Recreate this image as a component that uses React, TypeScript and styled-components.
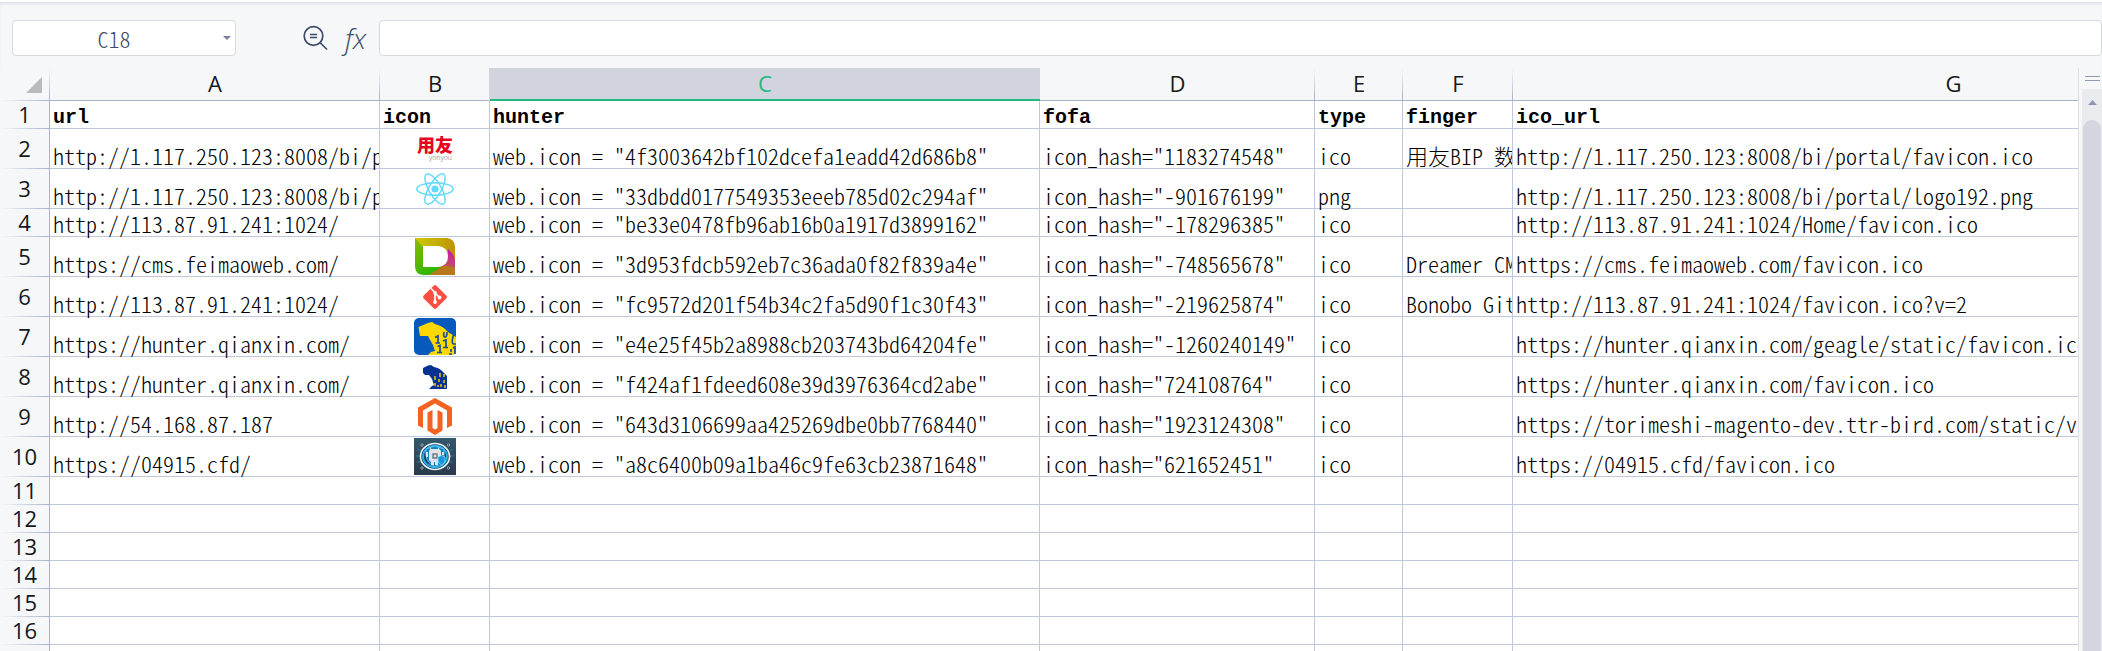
import React from "react";
import styled, { createGlobalStyle, css } from "styled-components";

const GRID = "#c0c8dd";
const RULE = "#a9b3cd";
const CHROME = "#f5f7f9";
const INK = "#3f4b66";
const GREEN = "#21b980";

const GlobalStyle = createGlobalStyle`
  *, *::before, *::after { box-sizing: border-box; }
  body { margin: 0; background: ${CHROME}; }
`;

const cellFont = css`
  font-family: "Noto Sans CJK SC", "Liberation Mono", monospace;
  font-feature-settings: "hwid";
  font-size: 22px;
  font-weight: 300;
  line-height: 26px;
`;

const Window = styled.main`
  display: flex;
  flex-direction: column;
  height: 100vh;
  overflow: hidden;
  background: ${CHROME};
  border-top: 2px solid #fff;
  box-shadow: inset 0 3px 3px -1px #dfe1e5;
`;

const FormulaBar = styled.header`
  display: flex;
  align-items: center;
  padding: 18px 0 12px 12px;
`;

const NameBox = styled.div`
  display: flex;
  width: 224px;
  height: 36px;
  border: 1px solid #d6d9df;
  border-radius: 4px;
  background: #fff;
`;

const NameInput = styled.input`
  ${cellFont}
  flex: 1;
  min-width: 0;
  padding: 0 4px 0 0;
  border: 0;
  outline: 0;
  background: none;
  color: ${INK};
  text-align: center;
`;

const IconButton = styled.button`
  display: flex;
  align-items: center;
  justify-content: center;
  padding: 0;
  border: 0;
  background: none;
  color: ${INK};
`;

const NameToggle = styled(IconButton)`
  width: 16px;
`;

const Tools = styled.div`
  display: flex;
  align-items: center;
  gap: 14px;
  margin: 0 10px 0 66px;
`;

const FxButton = styled(IconButton)`
  width: 27px;
  font: italic 300 28px/36px "Open Sans", "Noto Sans", sans-serif;
`;

const FormulaInput = styled.input`
  ${cellFont}
  flex: 1;
  min-width: 0;
  height: 36px;
  padding: 0 8px;
  border: 1px solid #d6d9df;
  border-radius: 4px;
  outline: 0;
  background: #fff;
`;

const Workspace = styled.div`
  display: flex;
  flex: 1;
  min-height: 0;
`;

const SheetView = styled.div`
  flex: 1;
  min-width: 0;
  overflow: hidden;
  border-right: 1px solid #dcdfe6;
`;

const Sheet = styled.table`
  table-layout: fixed;
  width: 2394px;
  border-collapse: separate;
  border-spacing: 0;
  color: #000;
`;

const Col = styled.col<{ $w: number }>`
  width: ${(p) => p.$w}px;
`;

const labelFont = css`
  padding: 0 0 2px;
  font: 400 22px/24px "Open Sans", "Noto Sans", sans-serif;
  color: #15171c;
  text-align: center;
  vertical-align: middle;
`;

const ColumnLabel = styled.th<{ $selected?: boolean }>`
  ${labelFont}
  height: 33px;
  border-bottom: 1px solid ${RULE};
  background: linear-gradient(to top, ${RULE}, ${CHROME}) right / 1px 100% no-repeat ${CHROME};
  ${(p) =>
    p.$selected &&
    css`
      color: ${GREEN};
      background: #d1d4dc;
      border-bottom: 2px solid ${GREEN};
      box-shadow: -1px 0 #d1d4dc;
    `}
`;

const Corner = styled(ColumnLabel)`
  padding: 0;
  border-bottom: 0;
  background:
    linear-gradient(to top, ${RULE}, ${CHROME}) right / 1px 100% no-repeat,
    linear-gradient(to left, ${RULE}, ${CHROME}) bottom / 100% 1px no-repeat ${CHROME};

  button {
    margin-left: 26px;
  }
`;

const Row = styled.tr<{ $tall?: boolean }>`
  height: ${(p) => (p.$tall ? 40 : 28)}px;
`;

const RowLabel = styled.th`
  ${labelFont}
  border-right: 1px solid ${RULE};
  background: linear-gradient(to left, ${RULE}, ${CHROME}) bottom / 100% 1px no-repeat ${CHROME};
`;

const Cell = styled.td`
  ${cellFont}
  padding: 0 0 0 3px;
  overflow-x: clip;
  overflow-y: visible;
  border-right: 1px solid ${GRID};
  border-bottom: 1px solid ${GRID};
  background: #fff;
  white-space: pre;
  vertical-align: bottom;
`;

const TitleCell = styled(Cell)`
  font-family: "Liberation Mono", monospace;
  font-size: 20px;
  font-weight: 700;
  line-height: 20px;
`;

const IconCell = styled(Cell)`
  padding: 0;
  vertical-align: middle;

  svg {
    display: block;
    margin: 0 auto;
  }
`;

const ScrollColumn = styled.div`
  display: flex;
  flex-direction: column;
  width: 23px;
  padding-left: 3px;
`;

const SplitHandle = styled.div`
  height: 5px;
  margin: 8px 2px 8px 3px;
  border: solid #8e9ab4;
  border-width: 1px 0;
`;

const Track = styled.div`
  display: flex;
  flex: 1;
  flex-direction: column;
  background: #e9ebef;
`;

const ScrollUp = styled(IconButton)`
  height: 31px;
  padding-bottom: 4px;
`;

const Thumb = styled.div`
  flex: 1;
  margin: 0 1px;
  border-radius: 9px 9px 0 0;
  background: #d3d6de;
`;

const YonyouIcon = () => (
  <svg width="36" height="28" viewBox="0 0 36 28" role="img" aria-label="yonyou">
    <text x="0" y="17" fill="#e8051b" fontFamily='"Noto Sans CJK SC", sans-serif' fontSize="18" fontWeight="900">用友</text>
    <text x="12" y="25" fill="#6a6a6a" fontFamily='"Open Sans", sans-serif' fontSize="7">yonyou</text>
  </svg>
);

const ReactIcon = () => (
  <svg width="40" height="34" viewBox="-20 -17 40 34" fill="none" stroke="#61dafb" strokeWidth="1.5" role="img" aria-label="React">
    <circle r="3.6" fill="#61dafb" stroke="none" />
    <ellipse rx="18.2" ry="6.2" />
    <ellipse rx="17.2" ry="6.2" transform="rotate(60)" />
    <ellipse rx="17.2" ry="6.2" transform="rotate(120)" />
  </svg>
);

const DreamerIcon = () => (
  <svg width="40" height="37" viewBox="0 0 40 37" role="img" aria-label="Dreamer CMS">
    <defs>
      <linearGradient id="dTop" x1="0" x2="1"><stop offset="0" stopColor="#cfca08" /><stop offset="1" stopColor="#bd9303" /></linearGradient>
      <linearGradient id="dLeft" x1="0" x2="0.6" y1="0" y2="1"><stop offset="0" stopColor="#8fb800" /><stop offset="1" stopColor="#27b808" /></linearGradient>
      <linearGradient id="dRight" x1="0" x2="0" y1="0" y2="1"><stop offset="0" stopColor="#cc12ae" /><stop offset="1" stopColor="#c3683c" /></linearGradient>
    </defs>
    <path d="M0 0H32Q40 1 40 9V37H0Z" fill="url(#dTop)" />
    <path d="M0 37V0L8 9V29H28L14 37Z" fill="url(#dLeft)" />
    <path d="M0 28Q0 37 9 37H0Z" fill="#fff" />
    <path d="M33 11Q40 17 40 23V37H14Q32 30 33 11Z" fill="url(#dRight)" />
    <path d="M14 37L28 28Q34 27 40 30V37Z" fill="#b9781c" />
    <path d="M8 8H23Q33 9 33 18.500Q33 28 23 29H8Z" fill="#fff" />
  </svg>
);

const GitIcon = () => (
  <svg width="24" height="24" viewBox="0 0 24 24" role="img" aria-label="Git">
    <path d="M10.600.7Q12-.5 13.400.7L23.300 10.600Q24.500 12 23.300 13.400L13.400 23.300Q12 24.500 10.600 23.300L.7 13.400Q-.5 12 .7 10.600Z" fill="#fc4f44" />
    <path d="M8 3.500L12 7.500V17M12 8L16.500 12.500" fill="none" stroke="#fff" strokeWidth="1.700" />
    <circle cx="12" cy="8" r="1.900" fill="#fff" />
    <circle cx="12" cy="17" r="1.900" fill="#fff" />
    <circle cx="16.500" cy="12.500" r="1.900" fill="#fff" />
  </svg>
);

const HunterIcon = () => (
  <svg width="42" height="37" viewBox="0 0 42 37" role="img" aria-label="Hunter">
    <rect width="42" height="37" rx="5" fill="#0859bd" />
    <path d="M4.500 9L14 5L18 4L21 6Q29 8 34 14L42 19V32Q42 37 37 37H14L17 34L21 33L19 27Q16 22 14 18L10 18L6 18L5.500 15Z" fill="#ffd800" />
    <path d="M21 19.500L24 18V25M21.500 25H26M30 14Q29 19 31 19Q33 19 33 14M29 23L32 22V29M29 29.500H34M23.500 28.500L26 27.500V34M23 34.500H28M39.500 17Q37 25 39.500 26H42M39 30L41 29V36M35 36H38M37 31V34" fill="none" stroke="#164f94" strokeWidth="1.700" />
  </svg>
);

const HunterSmallIcon = () => (
  <svg width="24" height="24" viewBox="0 0 24 24" role="img" aria-label="Hunter">
    <path d="M0 3L5 .5L8 0L11 2Q17 3 20 7L24 11V24H6L9 21L11 20L9 14L6 10H2L0 8Z" fill="#073193" />
    <path d="M12 11V15M12 18V21M17 8V12M16 14V17M15 20V22M21 9V12M21 15V18M22 20V23M18 19V22" stroke="#d9c516" strokeWidth="1.600" />
  </svg>
);

const MagentoIcon = () => (
  <svg width="36" height="37" viewBox="0 0 36 37" fill="#f26322" role="img" aria-label="Magento">
    <path d="M18 0L35 9.500V27.500L30 30V12.500L18 5.500L6 12.500V30L1 27.500V9.500Z" />
    <path d="M10.500 14.500L15.500 12V30L18 31.500L20.500 30V12L25.500 14.500V32.500L18 37L10.500 32.500Z" />
  </svg>
);

const RobotIcon = () => (
  <svg width="42" height="37" viewBox="0 0 42 37" role="img" aria-label="Robot shield">
    <defs>
      <linearGradient id="rBg" x1="0" x2="0" y1="0" y2="1"><stop offset="0" stopColor="#34586b" /><stop offset="1" stopColor="#2c3a4d" /></linearGradient>
    </defs>
    <rect width="42" height="37" fill="url(#rBg)" />
    <path d="M3 12H7M2 18H6M3 24H8M36 12H39M36 18H40M35 24H39" stroke="#287b98" strokeWidth="1" />
    <g fill="none" stroke="#9fb6c2" strokeWidth=".8">
      <circle cx="8" cy="7" r="1.200" /><circle cx="34.500" cy="7" r="1.200" /><circle cx="8" cy="30" r="1.200" /><circle cx="34.500" cy="30" r="1.200" />
    </g>
    <ellipse cx="21" cy="18.500" rx="14.500" ry="13" fill="#1d3f58" stroke="#e8f3f8" strokeWidth="1.600" />
    <ellipse cx="21" cy="18.500" rx="12" ry="10.700" fill="none" stroke="#2ba9e6" strokeWidth="2" />
    <path d="M12 11L21 8L30 11V18Q29 25 21 29Q13 25 12 18Z" fill="#1580b8" stroke="#53c6f4" strokeWidth="1" />
    <path d="M17 12L16 9.500M24 12L25 9.500" stroke="#dfe8ee" />
    <rect x="15" y="11" width="12" height="13" rx="3" fill="#dfe5ea" />
    <path d="M13 14V19M29 14V17" stroke="#dfe5ea" strokeWidth="2" />
    <rect x="17" y="24" width="3" height="3" fill="#dfe5ea" />
    <rect x="21" y="24" width="3" height="3" fill="#dfe5ea" />
    <rect x="19" y="16" width="4" height="4" fill="#dfe5ea" stroke="#53606d" strokeWidth="1.200" />
    <path d="M24 19L27.500 17.500L31 19V23Q30 26 27.500 27Q24.500 25 24 23Z" fill="#1597dc" stroke="#8fdcff" strokeWidth=".8" />
  </svg>
);

interface Column {
  id: string;
  width: number;
}

const columns: Column[] = [
  { id: "A", width: 330 },
  { id: "B", width: 110 },
  { id: "C", width: 550 },
  { id: "D", width: 275 },
  { id: "E", width: 88 },
  { id: "F", width: 110 },
  { id: "G", width: 881 },
];

interface Entry {
  url: string;
  Icon?: React.ComponentType;
  hunter: string;
  fofa: string;
  type: string;
  finger?: string;
  icoUrl: string;
}

const titles = ["url", "icon", "hunter", "fofa", "type", "finger", "ico_url"];

const entries: Entry[] = [
  { url: "http://1.117.250.123:8008/bi/portal/", Icon: YonyouIcon, hunter: "4f3003642bf102dcefa1eadd42d686b8", fofa: "1183274548", type: "ico", finger: "用友BIP 数据", icoUrl: "http://1.117.250.123:8008/bi/portal/favicon.ico" },
  { url: "http://1.117.250.123:8008/bi/portal/", Icon: ReactIcon, hunter: "33dbdd0177549353eeeb785d02c294af", fofa: "-901676199", type: "png", icoUrl: "http://1.117.250.123:8008/bi/portal/logo192.png" },
  { url: "http://113.87.91.241:1024/", hunter: "be33e0478fb96ab16b0a1917d3899162", fofa: "-178296385", type: "ico", icoUrl: "http://113.87.91.241:1024/Home/favicon.ico" },
  { url: "https://cms.feimaoweb.com/", Icon: DreamerIcon, hunter: "3d953fdcb592eb7c36ada0f82f839a4e", fofa: "-748565678", type: "ico", finger: "Dreamer CMS", icoUrl: "https://cms.feimaoweb.com/favicon.ico" },
  { url: "http://113.87.91.241:1024/", Icon: GitIcon, hunter: "fc9572d201f54b34c2fa5d90f1c30f43", fofa: "-219625874", type: "ico", finger: "Bonobo Git", icoUrl: "http://113.87.91.241:1024/favicon.ico?v=2" },
  { url: "https://hunter.qianxin.com/", Icon: HunterIcon, hunter: "e4e25f45b2a8988cb203743bd64204fe", fofa: "-1260240149", type: "ico", icoUrl: "https://hunter.qianxin.com/geagle/static/favicon.ico" },
  { url: "https://hunter.qianxin.com/", Icon: HunterSmallIcon, hunter: "f424af1fdeed608e39d3976364cd2abe", fofa: "724108764", type: "ico", icoUrl: "https://hunter.qianxin.com/favicon.ico" },
  { url: "http://54.168.87.187", Icon: MagentoIcon, hunter: "643d3106699aa425269dbe0bb7768440", fofa: "1923124308", type: "ico", icoUrl: "https://torimeshi-magento-dev.ttr-bird.com/static/version" },
  { url: "https://04915.cfd/", Icon: RobotIcon, hunter: "a8c6400b09a1ba46c9fe63cb23871648", fofa: "621652451", type: "ico", icoUrl: "https://04915.cfd/favicon.ico" },
];

const emptyRows = [11, 12, 13, 14, 15, 16, 17];

export default function App() {
  return (
    <Window>
      <GlobalStyle />
      <FormulaBar>
        <NameBox>
          <NameInput aria-label="Name box" defaultValue="C18" />
          <NameToggle aria-label="Choose a name">
            <svg width="8" height="4" viewBox="0 0 8 4"><path d="M0 0H8L4 4Z" fill="#7483a3" /></svg>
          </NameToggle>
        </NameBox>
        <Tools>
          <IconButton aria-label="Find value">
            <svg width="26" height="26" viewBox="0 0 26 26" fill="none" stroke="currentColor" strokeWidth="1.700">
              <circle cx="11.500" cy="11" r="9.300" />
              <path d="M18 17.500L25 24.500M8 9.500H15M8 12.500H15" />
            </svg>
          </IconButton>
          <FxButton aria-label="Insert function">fx</FxButton>
        </Tools>
        <FormulaInput aria-label="Formula" />
      </FormulaBar>
      <Workspace>
        <SheetView>
          <Sheet>
            <colgroup>
              <Col $w={50} />
              {columns.map((c) => <Col key={c.id} $w={c.width} />)}
            </colgroup>
            <thead>
              <tr>
                <Corner>
                  <IconButton aria-label="Select all">
                    <svg width="16" height="16" viewBox="0 0 16 16"><path d="M16 0V16H0Z" fill="#bababa" /></svg>
                  </IconButton>
                </Corner>
                {columns.map((c) => (
                  <ColumnLabel key={c.id} scope="col" $selected={c.id === "C"}>{c.id}</ColumnLabel>
                ))}
              </tr>
            </thead>
            <tbody>
              <Row>
                <RowLabel scope="row">1</RowLabel>
                {titles.map((t) => <TitleCell key={t}>{t}</TitleCell>)}
              </Row>
              {entries.map(({ Icon, ...e }, i) => (
                <Row key={i} $tall={Boolean(Icon)}>
                  <RowLabel scope="row">{i + 2}</RowLabel>
                  <Cell>{e.url}</Cell>
                  <IconCell>{Icon && <Icon />}</IconCell>
                  <Cell>{`web.icon = "${e.hunter}"`}</Cell>
                  <Cell>{`icon_hash="${e.fofa}"`}</Cell>
                  <Cell>{e.type}</Cell>
                  <Cell>{e.finger}</Cell>
                  <Cell>{e.icoUrl}</Cell>
                </Row>
              ))}
              {emptyRows.map((n) => (
                <Row key={n}>
                  <RowLabel scope="row">{n}</RowLabel>
                  {columns.map((c) => <Cell key={c.id} />)}
                </Row>
              ))}
            </tbody>
          </Sheet>
        </SheetView>
        <ScrollColumn>
          <SplitHandle />
          <Track>
            <ScrollUp aria-label="Scroll up">
              <svg width="9" height="5" viewBox="0 0 9 5"><path d="M0 5L4.500 0L9 5Z" fill="#8c98b2" /></svg>
            </ScrollUp>
            <Thumb />
          </Track>
        </ScrollColumn>
      </Workspace>
    </Window>
  );
}
